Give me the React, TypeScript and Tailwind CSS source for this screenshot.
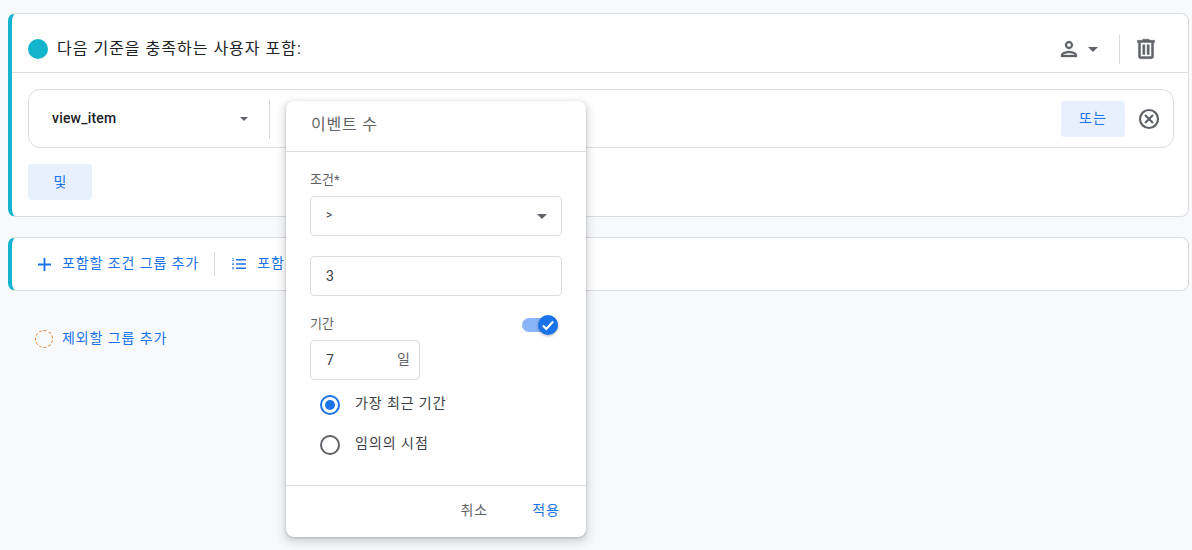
import React from "react";

const font = { fontFamily: '"Roboto", "Noto Sans CJK KR", sans-serif' };

function Caret({ className }: { className: string }) {
  return (
    <svg viewBox="0 0 10 5" className={className} fill="currentColor">
      <path d="M0 0h10L5 5z" />
    </svg>
  );
}

export default function App() {
  return (
    <div className="relative h-[550px] w-[1192px] overflow-hidden bg-[#f8f9fa] font-['Roboto','Noto_Sans_CJK_KR',sans-serif] text-[#202124]">
      <div className="flex flex-col pl-2 pr-[3px] pt-[13px]">
        {/* include card */}
        <div className="h-[204px] rounded-lg border border-l-4 border-[#dadce0] border-l-[#12b5cb] bg-white">
          <div className="flex h-[59px] items-center justify-between border-b border-[#dadce0] pl-4 pr-[29px] pt-3">
            <div className="flex items-center gap-[9px]">
              <span className="h-5 w-5 rounded-full bg-[#12b5cb]" />
              <span className="text-[16px] tracking-[1px] text-[#202124]">다음 기준을 충족하는 사용자 포함:</span>
            </div>
            <div className="flex items-center">
              <svg viewBox="0 0 24 24" className="h-6 w-6 text-[#5f6368]" fill="currentColor" stroke="currentColor" strokeWidth="0.3">
                <path d="M12 6c1.1 0 2 .9 2 2s-.9 2-2 2-2-.9-2-2 .9-2 2-2m0 10c2.7 0 5.8 1.29 6 2H6c.23-.72 3.31-2 6-2m0-12C9.79 4 8 5.79 8 8s1.79 4 4 4 4-1.79 4-4-1.79-4-4-4zm0 10c-2.67 0-8 1.34-8 4v2h16v-2c0-2.66-5.33-4-8-4z" />
              </svg>
              <Caret className="ml-[7px] h-[5px] w-[10px] text-[#5f6368]" />
              <span className="ml-[21px] h-[30px] w-px bg-[#dadce0]" />
              <svg viewBox="0 0 24 24" className="ml-[13px] h-[26px] w-[26px] text-[#5f6368]" fill="currentColor" stroke="currentColor" strokeWidth="0.4">
                <path d="M15 4V3H9v1H4v2h1v13c0 1.1.9 2 2 2h10c1.1 0 2-.9 2-2V6h1V4h-5zm2 15H7V6h10v13zM9 8h2v9H9zm4 0h2v9h-2z" />
              </svg>
            </div>
          </div>
          <div className="flex flex-col items-start pl-4 pr-[14px] pt-4">
            <div className="flex h-[59px] w-full items-center rounded-xl border border-[#dadce0] bg-white pl-[23px] pr-[12px]">
              <span className="-mt-[2px] text-sm font-medium tracking-[0.2px] text-[#202124]">view_item</span>
              <Caret className="ml-[124px] h-1 w-2 text-[#5f6368]" />
              <span className="ml-[21px] h-10 w-px bg-[#dadce0]" />
              <div className="flex-1" />
              <button className="h-9 w-16 rounded bg-[#e8f0fe] text-[14px] tracking-[1px] text-[#1a73e8]">또는</button>
              <svg viewBox="0 0 24 24" className="ml-3 h-6 w-6 text-[#5f6368]" fill="none" stroke="currentColor" strokeWidth="2.2">
                <circle cx="12" cy="12" r="9" />
                <path d="M8 8l8 8M16 8l-8 8" />
              </svg>
            </div>
            <button className="mt-4 h-9 w-16 rounded bg-[#e8f0fe] text-[14px] text-[#1a73e8]">및</button>
          </div>
        </div>

        {/* add row */}
        <div className="mt-5 flex h-[54px] items-center rounded-lg border border-l-4 border-[#dadce0] border-l-[#12b5cb] bg-white pl-[26px]">
          <svg viewBox="0 0 14 14" className="h-[13px] w-[13px] text-[#1a73e8]" fill="currentColor">
            <path d="M6 0h2v6h6v2H8v6H6V8H0V6h6z" />
          </svg>
          <span className="ml-[11px] -mt-[1px] text-[14px] tracking-[0.9px] text-[#1a73e8]">포함할 조건 그룹 추가</span>
          <span className="ml-[15px] h-6 w-px bg-[#dadce0]" />
          <svg viewBox="0 0 14 12" className="ml-[17px] h-3 w-[14px] text-[#1a73e8]" fill="currentColor">
            <path d="M4 1h10v1.5H4zM4 5.2h10v1.5H4zM4 9.5h10V11H4z" />
            <path d="M0 .5h2v.8H0zM0 2h2v.8H0zM0 4.7h2v.8H0zM0 6.3h2v.8H0zM0 9h2v.8H0zM0 10.5h2v.8H0z" />
          </svg>
          <span className="ml-[11px] -mt-[1px] text-[14px] tracking-[1px] text-[#1a73e8]">포함</span>
        </div>

        {/* exclude */}
        <div className="mt-[38px] flex items-center pl-[27px]">
          <span className="h-[18px] w-[18px] rounded-full border border-dashed border-[#e8710a]" />
          <span className="ml-[9px] -mt-[1px] text-[14px] tracking-[0.9px] text-[#1a73e8]">제외할 그룹 추가</span>
        </div>
      </div>

      {/* popover */}
      <div
        style={font}
        className="absolute left-[286px] top-[101px] flex h-[436px] w-[300px] flex-col rounded-lg bg-white shadow-[0_1px_3px_rgba(60,64,67,0.3),0_4px_8px_3px_rgba(60,64,67,0.15)]"
      >
        <div className="flex h-[51px] shrink-0 items-center border-b border-[#dadce0] pb-[2px] pl-[25px] text-[16px] tracking-[0.8px] text-[#5f6368]">이벤트 수</div>
        <div className="flex flex-1 flex-col px-6">
          <div className="mt-5 text-[13px] leading-4 text-[#5f6368]">조건*</div>
          <div className="mt-2 flex h-10 items-center justify-between rounded border border-[#dadce0] pl-[15px] pr-[14px] text-xs text-[#3c4043]">
            <span className="-mt-[3px]">&gt;</span>
            <Caret className="h-[5px] w-[10px] text-[#5f6368]" />
          </div>
          <div className="mt-5 flex h-10 items-center rounded border border-[#dadce0] pl-[15px] text-sm text-[#3c4043]">3</div>
          <div className="mt-[18px] flex items-start justify-between">
            <span className="text-[13px] leading-5 text-[#5f6368]">기간</span>
            <span className="relative mr-1 mt-1 h-[14px] w-9 rounded-full bg-[#8ab4f8]">
              <span className="absolute -top-[3px] right-0 flex h-5 w-5 items-center justify-center rounded-full bg-[#1a73e8] shadow-[0_1px_3px_rgba(60,64,67,0.4)]">
                <svg viewBox="0 0 14 14" className="h-4 w-4 text-white" fill="none" stroke="currentColor" strokeWidth="1.8">
                  <path d="M2.5 7.5l3 3 6-6.5" />
                </svg>
              </span>
            </span>
          </div>
          <div className="mt-[6px] flex h-10 w-[110px] items-center justify-between rounded border border-[#dadce0] pl-[15px] pr-[9px] text-sm text-[#3c4043]">
            <span>7</span>
            <span className="-mt-[2px] text-[14px] text-[#5f6368]">일</span>
          </div>
          <div className="mt-[15px] flex h-5 items-center pl-[10px]">
            <span className="flex h-5 w-5 items-center justify-center rounded-full border-2 border-[#1a73e8]">
              <span className="h-[10px] w-[10px] rounded-full bg-[#1a73e8]" />
            </span>
            <span className="ml-[15px] -mt-[4px] text-[14px] tracking-[0.9px] text-[#3c4043]">가장 최근 기간</span>
          </div>
          <div className="mt-5 flex h-5 items-center pl-[10px]">
            <span className="h-5 w-5 rounded-full border-2 border-[#5f6368]" />
            <span className="ml-[15px] -mt-[4px] text-[14px] tracking-[1px] text-[#3c4043]">임의의 시점</span>
          </div>
        </div>
        <div className="flex h-[52px] shrink-0 items-center justify-end border-t border-[#dadce0] pb-[2px] pr-[26px] text-[14px] tracking-[1px]">
          <span className="text-[#5f6368]">취소</span>
          <span className="ml-[44px] text-[#1a73e8]">적용</span>
        </div>
      </div>
    </div>
  );
}
